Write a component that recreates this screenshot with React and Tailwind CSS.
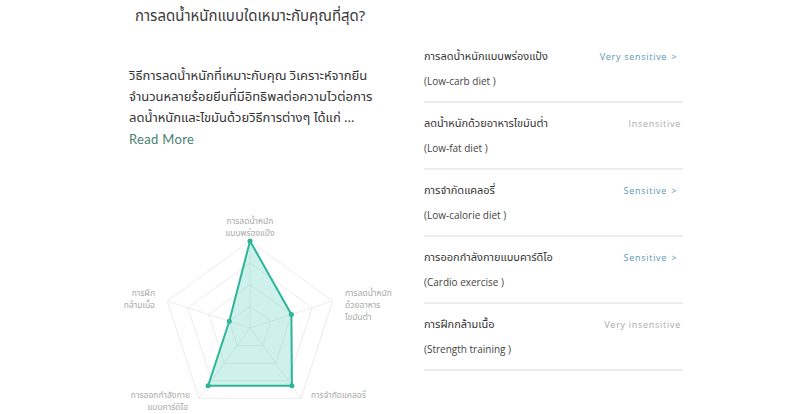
import React from 'react'

const font = { fontFamily: '"Noto Sans Thai", "Noto Sans", "Open Sans", sans-serif' }
const latin = { fontFamily: 'Lato, "Open Sans", sans-serif' }

const diets = [
  { th: 'การลดน้ำหนักแบบพร่องแป้ง', en: '(Low-carb diet )', level: 'Very sensitive', hot: true },
  { th: 'ลดน้ำหนักด้วยอาหารไขมันต่ำ', en: '(Low-fat diet )', level: 'Insensitive', hot: false },
  { th: 'การจำกัดแคลอรี่', en: '(Low-calorie diet )', level: 'Sensitive', hot: true },
  { th: 'การออกกำลังกายแบบคาร์ดิโอ', en: '(Cardio exercise )', level: 'Sensitive', hot: true },
  { th: 'การฝึกกล้ามเนื้อ', en: '(Strength training )', level: 'Very insensitive', hot: false },
]

const values = [1, 0.5, 0.82, 0.82, 0.25]

function pt(i, r) {
  const a = ((-90 + 72 * i) * Math.PI) / 180
  return [140 + Math.cos(a) * 87 * r, 118 + Math.sin(a) * 87 * r]
}

function poly(fn) {
  return [0, 1, 2, 3, 4].map(i => fn(i).map(n => n.toFixed(1)).join(',')).join(' ')
}

function Radar() {
  return (
    <svg width="290" height="204" viewBox="0 0 290 204" className="block">
      {[0.25, 0.5, 0.75, 1].map(r => (
        <polygon key={r} points={poly(i => pt(i, r))} fill="none" stroke="#ececec" strokeWidth="1" />
      ))}
      {[0, 1, 2, 3, 4].map(i => {
        const [x, y] = pt(i, 1)
        return <line key={i} x1="140" y1="118" x2={x} y2={y} stroke="#ececec" strokeWidth="1" />
      })}
      <polygon
        points={poly(i => pt(i, values[i]))}
        fill="#5ed3bd"
        fillOpacity="0.3"
        stroke="#2db49a"
        strokeWidth="2"
        strokeLinejoin="round"
      />
      {values.map((v, i) => {
        const [x, y] = pt(i, v)
        return <circle key={i} cx={x} cy={y} r="2.5" fill="#2db49a" />
      })}
      <g fill="#a8a8a8" fontSize="8.5" style={font}>
        <text x="140" y="14" textAnchor="middle">การลดน้ำหนัก</text>
        <text x="140" y="26" textAnchor="middle">แบบพร่องแป้ง</text>
        <text x="235" y="86">การลดน้ำหนัก</text>
        <text x="235" y="98">ด้วยอาหาร</text>
        <text x="235" y="110">ไขมันต่ำ</text>
        <text x="201" y="188">การจำกัดแคลอรี่</text>
        <text x="80" y="188" textAnchor="end">การออกกำลังกาย</text>
        <text x="78" y="200" textAnchor="end">แบบคาร์ดิโอ</text>
        <text x="45" y="86" textAnchor="end">การฝึก</text>
        <text x="45" y="98" textAnchor="end">กล้ามเนื้อ</text>
      </g>
    </svg>
  )
}

export default function App() {
  return (
    <div className="w-[800px] h-[414px] bg-white overflow-hidden" style={font}>
      {/* Heading */}
      <div className="h-[34px] pl-[135px] flex items-center text-[15px] text-[#3a3a3a]">
        การลดน้ำหนักแบบใดเหมาะกับคุณที่สุด?
      </div>

      <div className="flex">
        {/* Left: intro + chart */}
        <div className="w-[290px] ml-[110px] flex flex-col">
          <div className="pl-[19px] pt-[32px]">
            <p className="text-[13px] leading-[21px] text-[#333] w-[250px]">
              วิธีการลดน้ำหนักที่เหมาะกับคุณ วิเคราะห์จากยีน จำนวนหลายร้อยยีนที่มีอิทธิพลต่อความไวต่อการ
              ลดน้ำหนักและไขมันด้วยวิธีการต่างๆ ได้แก่ ...
            </p>
            <div className="text-[13px] leading-[21px] text-[#4a7f72] tracking-wide" style={latin}>
              Read More
            </div>
          </div>
          <div className="mt-[60px]">
            <Radar />
          </div>
        </div>

        {/* Right: diet list */}
        <div className="ml-[24px] w-[259px] pt-[2px]">
          {diets.map(d => (
            <div key={d.en} className="pt-[11px] pb-[10px] border-b-2 border-[#ededed]">
              <div className="flex items-center justify-between h-[20px]">
                <span className="text-[11px] text-[#333]">{d.th}</span>
                <span
                  className={`text-[9px] tracking-[0.08em] ${d.hot ? 'text-[#5897b3] pr-[6px]' : 'text-[#a9a9a9] pr-[2px]'}`}
                  style={{ fontFamily: '"Open Sans", sans-serif' }}
                >
                  {d.level}
                  {d.hot && <span className="ml-[4px]">&gt;</span>}
                </span>
              </div>
              <div className="mt-[4px] h-[20px] flex items-center text-[10px] text-[#444]" style={{ fontFamily: '"Open Sans", "Noto Sans", sans-serif' }}>
                {d.en}
              </div>
            </div>
          ))}
        </div>
      </div>
    </div>
  )
}
